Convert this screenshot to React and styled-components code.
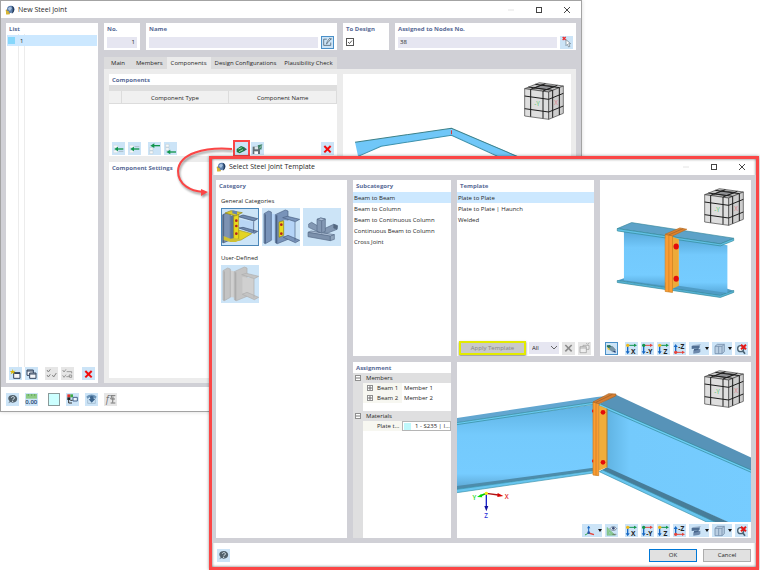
import React, { useState } from 'react';
import styled, { createGlobalStyle, css, ThemeProvider } from 'styled-components';

const theme = {
  color: {
    WHITE: '#ffffff',
    BODY: '#d0d0d6',
    PAGE: '#ececec',
    TAB: '#dcdcdd',
    FIELD: '#e6e6f1',
    SELECT: '#cce8ff',
    BUTTON: '#cce4f7',
    DISABLED: '#e6e6e6',
    TITLE: '#586a96',
    TEXT: '#1f1f1f',
    RED: '#fb4646',
  },
  fontSize: { SMALL: '6px', MEDIUM: '7px' },
};

const GlobalStyle = createGlobalStyle`
  * {
    box-sizing: border-box;
  }
  body {
    margin: 0;
    background-color: #fff;
    font-family: 'Open Sans', 'Noto Sans', sans-serif;
    font-size: 6px;
    line-height: 10px;
    color: #1f1f1f;
  }
  button, input, select {
    margin: 0;
    padding: 0;
    border: 0;
    border-radius: 0;
    font: inherit;
    color: inherit;
  }
  svg {
    display: block;
  }
`;

const SDesktop = styled.div`
  position: relative;
  height: 100vh;
  overflow: hidden;
`;

const SWindow = styled.section`
  position: absolute;
  inset: ${({ $inset }) => $inset};
  display: flex;
  flex-direction: column;
  background-color: ${({ theme }) => theme.color.WHITE};
  border: ${({ theme, $active }) =>
    $active ? `3px solid ${theme.color.RED}` : '1px solid #a3a3a3'};
  box-shadow: ${({ $active }) =>
    $active
      ? '0 0 3px rgba(0, 0, 0, 0.4), inset 0 0 3px rgba(0, 0, 0, 0.6)'
      : '0 0 4px rgba(0, 0, 0, 0.15)'};
`;

const STitleBar = styled.header`
  display: flex;
  flex: none;
  height: ${({ $compact }) => ($compact ? '16px' : '17px')};
  align-items: center;
  gap: 3px;
  padding: 0 8px 0 4px;
`;

const STitle = styled.h1`
  flex: 1;
  margin: 0;
  font-size: ${({ theme }) => theme.fontSize.MEDIUM};
  font-weight: 400;
`;

const SWindowButton = styled.button`
  display: flex;
  width: 12px;
  height: 12px;
  margin-left: 13px;
  align-items: center;
  justify-content: center;
  background: none;
`;

const SBody = styled.main`
  display: flex;
  flex: 1;
  min-height: 0;
  gap: 6px;
  padding: 5px 5px 4px;
  background-color: ${({ theme }) => theme.color.BODY};
`;

const STemplateBody = styled.main`
  display: grid;
  flex: 1;
  min-height: 0;
  grid-template-columns: 131fr 98fr 137fr 151fr;
  grid-template-rows: 1fr 1fr;
  gap: 6px;
  padding: 5px 5px 5px 4px;
  background-color: ${({ theme }) => theme.color.BODY};
`;

const SPanel = styled.section`
  position: relative;
  display: flex;
  flex-direction: column;
  flex: ${({ $flex }) => $flex || 'none'};
  grid-row: ${({ $rows }) => $rows || 'auto'};
  grid-column: ${({ $columns }) => $columns || 'auto'};
  min-width: 0;
  min-height: 0;
  overflow: hidden;
  background-color: ${({ theme }) => theme.color.WHITE};
`;

const panelTitle = css`
  display: block;
  margin: 0;
  padding: 1px 3px 0;
  font-size: ${({ theme }) => theme.fontSize.SMALL};
  font-weight: 700;
  line-height: 10px;
  color: ${({ theme }) => theme.color.TITLE};
`;

const SPanelTitle = styled.h2`
  ${panelTitle}
`;

const SPanelLabel = styled.label`
  ${panelTitle}
`;

const SFieldRow = styled.div`
  display: flex;
  align-items: center;
  gap: 3px;
  height: 16px;
  padding: 0 3px;
`;

const SInput = styled.input`
  flex: 1;
  min-width: 0;
  height: 11px;
  padding: 0 2px;
  text-align: ${({ $align }) => $align || 'left'};
  background-color: ${({ theme }) => theme.color.FIELD};
`;

const SCheckWrap = styled.span`
  display: grid;
  > * {
    grid-area: 1 / 1;
  }
  svg {
    margin: 1px;
    pointer-events: none;
  }
`;

const SCheckbox = styled.input`
  width: 8px;
  height: 8px;
  appearance: none;
  border: 1px solid #555;
  background-color: #fff;
  &:not(:checked) + svg {
    visibility: hidden;
  }
`;

const SToolButton = styled.button`
  display: flex;
  flex: none;
  width: ${({ $wide }) => ($wide ? '20px' : '13px')};
  height: 13px;
  align-items: center;
  justify-content: center;
  gap: 2px;
  margin-left: ${({ $gap }) => ($gap ? '4px' : '0')};
  background-color: ${({ theme, disabled }) =>
    disabled ? theme.color.DISABLED : theme.color.BUTTON};
  border: ${({ $pressed }) => ($pressed ? '1px solid #4a90c8' : '0')};
  outline: ${({ theme, $marked }) => ($marked ? `2px solid ${theme.color.RED}` : 'none')};
`;

const SToolbar = styled.div`
  display: flex;
  flex: none;
  align-items: center;
  gap: 3px;
  margin-top: auto;
  padding: ${({ $padding }) => $padding || '0 3px 1px'};
  justify-content: ${({ $align }) => $align || 'flex-start'};
`;

const SSpacer = styled.span`
  flex: 1;
`;

const SJointList = styled.ul`
  display: grid;
  flex: 1;
  margin: 0 1px;
  padding: 1px 0 0;
  grid-auto-rows: 12px;
  list-style: none;
  background: linear-gradient(
    90deg,
    transparent 11px,
    #ececec 11px 12px,
    transparent 12px 17px,
    #ececec 17px 18px,
    transparent 18px
  );
`;

const SJointRow = styled.button`
  display: flex;
  width: 100%;
  height: 11px;
  align-items: center;
  gap: 5px;
  padding: 0 1px;
  background-color: ${({ theme }) => theme.color.SELECT};
`;

const SSwatch = styled.span`
  width: 7px;
  height: 7px;
  background-color: ${({ $color }) => $color};
`;

const SColorButton = styled.button`
  width: 12px;
  height: 13px;
  margin-left: 4px;
  border: 1px solid #8a9a9a;
  background-color: #ccffff;
`;

const SDetails = styled.div`
  display: flex;
  flex: 1;
  min-width: 0;
  flex-direction: column;
`;

const SHeadRow = styled.div`
  display: flex;
  gap: 6px;
`;

const STabs = styled.div`
  display: flex;
  margin-top: 7px;
`;

const STab = styled.button`
  height: 12px;
  padding: 0 4px;
  white-space: nowrap;
  background-color: ${({ theme, $active }) => ($active ? theme.color.PAGE : theme.color.TAB)};
  &:first-child {
    padding: 0 7px;
  }
`;

const STabPage = styled.div`
  display: flex;
  flex: 1;
  min-height: 0;
  gap: 6px;
  padding: 5px;
  background-color: ${({ theme }) => theme.color.PAGE};
`;

const SColumn = styled.div`
  display: flex;
  flex: 1 1 0;
  min-width: 0;
  flex-direction: column;
  gap: 6px;
`;

const SComponentTable = styled.table`
  width: 100%;
  border-collapse: collapse;
  table-layout: fixed;
  border-top: 6px solid #dedede;
  margin-bottom: 38px;
  th {
    height: 14px;
    padding: 2px 0 0;
    font-weight: 400;
    background-color: #f0f0f0;
    border-right: 1px solid #dcdcdc;
    border-bottom: 1px solid #dcdcdc;
  }
  th:first-child {
    width: 12px;
  }
`;

const SFooter = styled.footer`
  display: flex;
  flex: none;
  height: 24px;
  align-items: center;
  gap: 6px;
  padding: 0 5px;
`;

const SDialogButton = styled.button`
  width: 48px;
  height: 13px;
  background-color: #e1e1e1;
  border: ${({ $primary }) => ($primary ? '1px solid #0078d7' : '1px solid #adadad')};
`;

const SGroupTitle = styled.h3`
  margin: 5px 0 2px;
  padding: 0 5px;
  font-size: ${({ theme }) => theme.fontSize.SMALL};
  font-weight: 400;
  line-height: 10px;
`;

const STiles = styled.div`
  display: flex;
  gap: 3px;
  padding: 0 5px;
  margin-bottom: 2px;
`;

const STile = styled.button`
  width: 38px;
  height: 38px;
  background-color: ${({ theme }) => theme.color.BUTTON};
  outline: ${({ $active }) => ($active ? '1px solid #4a86b8' : 'none')};
  outline-offset: -1px;
`;

const SOptions = styled.ul`
  margin: 0;
  padding: 1px 0 0;
  list-style: none;
`;

const SOption = styled.button`
  display: block;
  width: 100%;
  height: 11px;
  padding: 0 1px;
  text-align: left;
  white-space: nowrap;
  background-color: ${({ theme, $active }) => ($active ? theme.color.SELECT : 'transparent')};
`;

const SApplyButton = styled.button`
  flex: 1;
  height: 14px;
  color: #858585;
  background-color: #c9c9c9;
  border: 1px solid #e2ea00;
  outline: 1px solid #e2ea00;
  outline-offset: -2px;
  box-shadow: 0 1px 2px rgba(0, 0, 0, 0.5);
`;

const SSelectWrap = styled.span`
  display: flex;
  width: 30px;
  align-items: center;
  background-color: ${({ theme }) => theme.color.FIELD};
  svg {
    flex: none;
    margin-right: 2px;
    pointer-events: none;
  }
`;

const SSelect = styled.select`
  flex: 1;
  min-width: 0;
  height: 12px;
  padding-left: 3px;
  appearance: none;
  background: none;
`;

const SAssignments = styled.table`
  width: 100%;
  height: 100%;
  border-collapse: collapse;
  table-layout: fixed;
  line-height: 9px;
  th,
  td {
    height: ${({ $rowHeight }) => $rowHeight || '10px'};
    padding: 0;
    font-weight: 400;
    text-align: left;
    white-space: nowrap;
    overflow: hidden;
  }
`;

const SBlankRow = styled.tr`
  && > * {
    height: 8px;
  }
`;

const SFillRow = styled.tr`
  height: 100%;
`;

const SGutter = styled.td`
  width: 10px;
  background-color: #dfdfe0;
`;

const SGroupCell = styled.th`
  && {
    padding-left: 3px;
  }
  background-color: #dfdfe0;
`;

const SNameCell = styled.th`
  width: 39px;
  background-color: #f7f7f1;
`;

const SCellContent = styled.span`
  display: flex;
  align-items: center;
  gap: 4px;
  padding-left: ${({ $indent }) => $indent || '0'};
`;

const SMaterial = styled(SCellContent)`
  height: 10px;
  padding-left: 1px;
  border: 1px solid #b5b5b5;
`;

const SToggle = styled.button`
  display: flex;
  width: 6px;
  height: 6px;
  align-items: center;
  justify-content: center;
  margin-left: ${({ $gutter }) => ($gutter ? '2px' : '0')};
  background-color: #fff;
  border: 1px solid #8f8f8f;
`;

const SScene = styled.svg`
  position: absolute;
  inset: 0;
  width: 100%;
  height: 100%;
`;

const SCube = styled.svg`
  position: absolute;
  top: 8px;
  right: 7px;
  width: 40px;
  height: 38px;
`;

const SViewTools = styled(SToolbar)`
  position: relative;
`;

const SArrow = styled.svg`
  position: absolute;
  top: 142px;
  left: 174px;
  width: 60px;
  height: 58px;
  pointer-events: none;
  filter: drop-shadow(1px 2px 1px rgba(0, 0, 0, 0.4));
`;

const GREEN = '#12964d';
const RED = '#e5463d';

function Axes({ letter, flip }) {
  const y = flip ? 28 : 7;
  const tip = flip ? 8 : 29;
  const sideColor = flip || letter === '-Y' ? RED : GREEN;
  let origin = '#f0b91d';
  if (flip) origin = RED;
  if (letter === '-Y') origin = GREEN;

  return (
    <>
      <path d={`M8 ${y}V${tip}`} stroke="#1768c4" strokeWidth="4" />
      <path d={flip ? 'M2 12L8 3L14 12Z' : 'M2 25L8 34L14 25Z'} fill="#1768c4" />
      <path d={`M8 ${y}H29`} stroke={sideColor} strokeWidth="3" />
      <path d={`M27 ${y - 5}L36 ${y}L27 ${y + 5}Z`} fill={sideColor} />
      <circle cx="8" cy={y} r="5" fill={origin} />
      <text
        x="25"
        y={flip ? 19 : 32}
        fontSize="20"
        fontWeight="700"
        textAnchor="middle"
        fill="#222"
      >
        {letter}
      </text>
    </>
  );
}

const icons = {
  edit: (
    <g fill="none" stroke="#3d5264" strokeWidth="2.500">
      <path d="M17 8H6v22h25V20" />
      <path d="M16 25l3-9L27 5l4 3L21 20z" fill="#e9f2f8" />
      <path d="M29 7h6" />
    </g>
  ),
  pick: (
    <>
      <path d="M8 3l9 9M17 3L8 12" stroke="#ec2d2d" strokeWidth="4" />
      <path d="M18 11V29L22 25L26 33L30 31L26 23H32Z" fill="#fff" stroke="#667986" strokeWidth="2" />
    </>
  ),
  up: (
    <>
      <path d="M5 7H17V14H5ZM5 22H17V29H5Z" fill="#f5f8fa" stroke="#c3ccd2" />
      <path d="M15 18H34" stroke={GREEN} strokeWidth="4" />
      <path d="M18 11L7 18L18 25Z" fill={GREEN} />
      <path d="M20 25H34" stroke="#9aa8b0" strokeWidth="2" />
    </>
  ),
  down: (
    <>
      <path d="M5 7H17V14H5ZM5 22H17V29H5Z" fill="#f5f8fa" stroke="#c3ccd2" />
      <path d="M15 18H34" stroke={GREEN} strokeWidth="4" />
      <path d="M18 11L7 18L18 25Z" fill={GREEN} />
      <path d="M20 11H34" stroke="#9aa8b0" strokeWidth="2" />
    </>
  ),
  first: (
    <>
      <path d="M5 14H15V22H5ZM5 24H15V32H5Z" fill="#f5f8fa" stroke="#a9b5bd" />
      <path d="M16 8H36" stroke={GREEN} strokeWidth="4" />
      <path d="M19 1L7 8L19 15Z" fill={GREEN} />
    </>
  ),
  last: (
    <>
      <path d="M5 4H15V12H5ZM5 14H15V22H5Z" fill="#f5f8fa" stroke="#a9b5bd" />
      <path d="M16 27H36" stroke={GREEN} strokeWidth="4" />
      <path d="M19 20L7 27L19 34Z" fill={GREEN} />
    </>
  ),
  load: (
    <>
      <path d="M5 18L18 9L28 13V24L14 31L5 27Z" fill="#1d7943" />
      <path d="M10 18L20 14M12 26L24 20" stroke="#a1d6ac" strokeWidth="3" />
      <path d="M27 13L36 19L27 25Z" fill="#3e5c5a" />
    </>
  ),
  save: (
    <>
      <path d="M5 11H27V33H5Z" fill="#617077" />
      <path d="M11 11h10v8H11z" fill="#dbe4e9" />
      <path d="M10 25h11v8H10z" fill="#fff" />
      <path d="M20 7L34 4L31 20L23 17Z" fill="#3e8368" />
      <path d="M25 16L33 7" stroke="#d2e4dc" strokeWidth="2" />
    </>
  ),
  remove: <path d="M10 9L29 28M29 9L10 28" stroke="#f30b0b" strokeWidth="6" />,
  removeGray: <path d="M10 9L29 28M29 9L10 28" stroke="#8c8c8c" strokeWidth="5" />,
  copyGray: (
    <g fill="#eee" stroke="#969696" strokeWidth="2">
      <path d="M15 10H33V22H15Z" />
      <path d="M6 14H25V32H6Z" />
      <path d="M6 18H25M25 3l3 4M34 2l-4 5" />
    </g>
  ),
  add: (
    <>
      <path d="M14 14H33V31H14Z" fill="#f7f7f7" stroke="#33445f" strokeWidth="3" />
      <path d="M14 16H33" stroke="#33445f" strokeWidth="4" />
      <path d="M11 3L13 9L20 8L15 13L17 19L11 15L5 19L7 13L2 9L9 9Z" fill="#d9b910" />
    </>
  ),
  copy: (
    <g fill="#f4f7fa" stroke="#33445f" strokeWidth="3">
      <path d="M6 6H25V22H6ZM6 9H25" />
      <path d="M14 15H33V31H14ZM14 18H33" />
    </g>
  ),
  checks: (
    <g fill="none" stroke="#858585" strokeWidth="3">
      <path d="M6 6L10 12L16 4M6 21L10 27L16 19M22 21L26 27L34 15" />
    </g>
  ),
  invert: (
    <g fill="none" stroke="#8a8a8a" strokeWidth="2.500">
      <path d="M5 6L9 12L15 4M5 22L9 28L15 20M17 11H32V16M16 26H26M24 21H32V28H26Z" />
    </g>
  ),
  help: (
    <>
      <path d="M7 31L11 25C2 15 9 6 20 6C38 6 38 29 20 29C16 29 14 28 13 27Z" fill="#52616b" />
      <path d="M16 14C17 9 27 10 25 16C24 19 20 18 20 22M20 24V27" fill="none" stroke="#dce9f1" strokeWidth="3" />
    </>
  ),
  units: (
    <>
      <path d="M3 3H36V17H3Z" fill="#8dca85" />
      <path d="M10 3V9M20 3V9M29 3V9" stroke="#539d50" strokeWidth="2" />
      <text x="19" y="33" fontSize="18" fontWeight="600" textAnchor="middle" fill="#26436b">
        0,00
      </text>
    </>
  ),
  tree: (
    <>
      <path d="M4 4h9v9H4z" fill="#e4332b" />
      <path d="M13 4h8v9h-8z" fill="#3caa46" />
      <path d="M4 13h9v8H4z" fill="#242424" />
      <path d="M8 20V30H18M13 22H20" fill="none" stroke="#333" strokeWidth="3" />
      <path d="M21 13H34V24H21Z" fill="#eaf4fc" stroke="#46648c" strokeWidth="3" />
    </>
  ),
  view: (
    <>
      <path d="M4 11C13 2 26 2 35 11L31 18C24 9 15 9 8 18Z" fill="#6c94b8" />
      <path d="M14 11L20 8L26 11V17L31 18L20 29L11 19L16 18Z" fill="#3c658d" />
      <path d="M8 20V31H31V20" fill="none" stroke="#97b1c6" strokeWidth="2" />
    </>
  ),
  script: (
    <>
      <text x="5" y="29" fontSize="30" fontStyle="italic" fill="#777">
        f
      </text>
      <path d="M19 8H34M24 8L20 18H33M27 11L26 29M20 30H34" fill="none" stroke="#777" strokeWidth="3" />
    </>
  ),
  model: (
    <>
      <path d="M3 5L14 4L24 14L16 19L3 11Z" fill="#27755b" />
      <path d="M12 11L24 9L34 21L25 29L12 20Z" fill="#7895a6" stroke="#435765" />
      <path d="M5 12L13 17V23L5 18Z" fill="#e9c63a" />
      <path d="M24 27l10 5v-9z" fill="#223f77" />
    </>
  ),
  viewX: <Axes letter="X" />,
  viewY: <Axes letter="-Y" />,
  viewZ: <Axes letter="Z" />,
  viewMinusZ: <Axes letter="-Z" flip />,
  render: (
    <>
      <path d="M5 9L29 5V14L24 16L5 18Z" fill="#506f94" />
      <path d="M10 22L31 17V27L26 30L10 32Z" fill="#6d89ac" />
      <path d="M5 9L10 6L33 4L29 8Z" fill="#93abc6" />
      <path d="M12 18L26 15V20L12 23Z" fill="#46648a" />
    </>
  ),
  box: (
    <g fill="#b9cee2" stroke="#7690ad" strokeWidth="2.500">
      <path d="M6 10L13 4H34V26L27 32H6Z" />
      <path d="M6 10H27V32M27 10L34 4M17 10V32" fill="none" />
    </g>
  ),
  axes: (
    <>
      <path d="M17 5V24" stroke="#1768c4" strokeWidth="3" />
      <path d="M17 24L6 30" stroke="#32a852" strokeWidth="3" />
      <path d="M17 24L33 29" stroke="#e5463d" strokeWidth="4" />
      <path d="M12 10L17 2L22 10Z" fill="#1768c4" />
      <circle cx="17" cy="23" r="4" fill="#2a55aa" />
    </>
  ),
  measure: (
    <>
      <path d="M6 7V31H31ZM12 20V26H19Z" fill="#8fce96" fillRule="evenodd" stroke="#4ea161" />
      <path d="M15 11C20 3 30 3 35 11C30 18 20 18 15 11Z" fill="#e7f0f7" stroke="#4b5c74" strokeWidth="2" />
      <circle cx="25" cy="10" r="4" fill="#384c76" />
      <path d="M22 28H34" stroke="#555" strokeWidth="2" />
    </>
  ),
  clear: (
    <>
      <circle cx="17" cy="17" r="9" fill="#eef4f8" stroke="#4a6374" strokeWidth="4" />
      <path d="M23 23L30 32" stroke="#4a6374" strokeWidth="5" />
      <path d="M18 5L33 19M33 5L18 19" stroke="#e51919" strokeWidth="6" />
    </>
  ),
};

function ToolButton({ icon, label, wide, ...rest }) {
  return (
    <SToolButton type="button" aria-label={label} $wide={wide} {...rest}>
      <svg width="13" height="12" viewBox="0 0 39 36">
        {icons[icon]}
      </svg>
      {wide && (
        <svg width="4" height="3" viewBox="0 0 4 3">
          <path d="M0 0H4L2 3Z" fill="#111" />
        </svg>
      )}
    </SToolButton>
  );
}

function WindowHeader({ title, compact }) {
  return (
    <STitleBar $compact={compact}>
      <svg width="10" height="10" viewBox="0 0 30 30">
        <path d="M2 15L12 10L15 28L4 28Z" fill="#c7a633" />
        <circle cx="17" cy="13" r="11" fill="#5d7fac" />
        <path d="M20 2C31 6 30 21 20 26C24 19 24 9 20 2Z" fill="#243c5c" />
        <path d="M8 11L15 5L21 9L15 18Z" fill="#a9c2de" />
        <path d="M3 18H11V28H3Z" fill="#d8b735" />
      </svg>
      <STitle>{title}</STitle>
      <SWindowButton type="button" aria-label="Minimize">
        <svg width="6" height="6" viewBox="0 0 6 6">
          <path d="M0 3H6" stroke="#e4e4e4" />
        </svg>
      </SWindowButton>
      <SWindowButton type="button" aria-label="Maximize">
        <svg width="6" height="6" viewBox="0 0 6 6">
          <rect x=".5" y=".5" width="5" height="5" fill="none" stroke="#444" />
        </svg>
      </SWindowButton>
      <SWindowButton type="button" aria-label="Close">
        <svg width="6" height="6" viewBox="0 0 6 6">
          <path d="M0 0L6 6M6 0L0 6" stroke="#333" strokeWidth=".9" />
        </svg>
      </SWindowButton>
    </STitleBar>
  );
}

function NavigationCube() {
  return (
    <SCube viewBox="0 0 120 114">
      <g stroke="#3d3d3d" strokeWidth="2" strokeLinejoin="round">
        <path d="M2 20L46 2L118 12L74 30Z" fill="#c4c4c4" />
        <path d="M2 20L74 30V112L2 102Z" fill="#dedede" />
        <path d="M74 30L118 12V94L74 112Z" fill="#cdcdcd" />
        <path d="M30 18L54 8L94 13L68 23Z" fill="#8f9093" />
      </g>
      <path
        d="M20 22V104M57 27V109M2 42L74 52L118 34M2 80L74 90L118 72M86 25V107M106 17V99M13 15L86 25M34 7L106 17M20 22L64 5M57 27L100 10"
        fill="none"
        stroke="#1c1c1c"
        strokeWidth="3"
      />
      <text x="39" y="72" fontSize="19" textAnchor="middle" fill="#51c766">
        -Y
      </text>
      <text x="96" y="68" fontSize="19" textAnchor="middle" fill="#db8087">
        X
      </text>
    </SCube>
  );
}

function FrameScene() {
  return (
    <SScene viewBox="343 74 227 304" preserveAspectRatio="xMidYMin slice">
      <path d="M355 142L451 128V135L381 146L358 156Z" fill="#70c7f8" />
      <path d="M451 128L570 178V188L451 135Z" fill="#70c7f8" />
      <path d="M355 142L451 128L570 179" fill="none" stroke="#3d8088" />
      <path d="M358 156L381 146L451 135L570 189" fill="none" stroke="#3c91ad" />
      <path d="M451 130V134" stroke="#d93636" />
    </SScene>
  );
}

function PlateScene() {
  return (
    <SScene viewBox="450 91 454 527">
      <defs>
        <linearGradient id="plate-web" x1="0" y1="0" x2="0" y2="1">
          <stop offset="0" stopColor="#58a9da" />
          <stop offset=".3" stopColor="#73c9fc" />
          <stop offset=".8" stopColor="#75ccff" />
          <stop offset="1" stopColor="#58aadb" />
        </linearGradient>
      </defs>
      <path d="M502 392L522 385L833 417L852 423L812 438Z" fill="#4f9cc5" />
      <path d="M502 392L812 437L852 422V428L812 443L502 398Z" fill="#58b4da" stroke="#2f8796" strokeWidth="2" />
      <path d="M522 244L646 262V408L522 391Z" fill="url(#plate-web)" />
      <path d="M686 266L833 286V430L686 408Z" fill="url(#plate-web)" />
      <path d="M502 236L545 218L852 265L812 282Z" fill="#5da2c8" stroke="#3c8b9e" strokeWidth="2" />
      <path d="M502 236L812 282L852 266V272L812 288L502 243Z" fill="#62c2e7" stroke="#2f8796" strokeWidth="2" />
      <path d="M666 260L687 268V408L666 418Z" fill="#eeaa38" />
      <path d="M646 254L668 257V428L646 425Z" fill="#fb9d33" stroke="#c87d20" strokeWidth="2" />
      <path d="M657 257V426" stroke="#c87d20" strokeWidth="2" />
      <path d="M646 253L690 234L711 238L668 258Z" fill="#db8130" stroke="#b96c1d" strokeWidth="2" />
      <path d="M657 255L700 236" stroke="#9d6223" strokeWidth="2" />
      <ellipse cx="679" cy="290" rx="8" ry="9" fill="#e30c0c" />
      <ellipse cx="679" cy="387" rx="8" ry="9" fill="#e30c0c" />
    </SScene>
  );
}

function JointScene() {
  return (
    <SScene viewBox="21 -54 882 528" preserveAspectRatio="xMidYMid slice">
      <defs>
        <linearGradient id="web-left" x1="0" y1="0" x2="0" y2="1">
          <stop offset="0" stopColor="#5eb1e1" />
          <stop offset=".35" stopColor="#74cafc" />
          <stop offset=".8" stopColor="#76ccff" />
          <stop offset="1" stopColor="#579fca" />
        </linearGradient>
        <linearGradient id="web-right" x1="0" y1="0" x2="1" y2="0">
          <stop offset="0" stopColor="#60b3e2" />
          <stop offset=".15" stopColor="#74cafc" />
          <stop offset="1" stopColor="#76ccff" />
        </linearGradient>
        <clipPath id="model-area">
          <path d="M0 -54H924V426H0Z" />
        </clipPath>
      </defs>
      <g clipPath="url(#model-area)">
        <path d="M0 134L430 74V270L0 333Z" fill="url(#web-left)" />
        <path d="M0 321L430 263V273L0 331Z" fill="#4d8cab" />
        <path d="M0 331L430 272V279L0 341Z" fill="#68c5ef" stroke="#3b93ab" strokeWidth="2" />
        <path d="M0 117L440 51L470 48L440 67L0 131Z" fill="#62a6d0" />
        <path d="M0 131L430 67V73L0 137Z" fill="#6ccdf4" stroke="#2f8796" strokeWidth="2" />
        <path d="M470 82L924 284V466L470 266Z" fill="url(#web-right)" />
        <path d="M470 262L835 426H775L450 274Z" fill="#477d99" />
        <path d="M448 275L458 270L795 426H770Z" fill="#68c5ef" stroke="#3b93ab" strokeWidth="2" />
        <path d="M448 72L498 44L924 242V282Z" fill="#5793b8" />
        <path d="M448 71L924 279V286L448 78Z" fill="#6ccdf4" stroke="#2f8796" strokeWidth="2" />
        <path d="M446 76L471 86V262L446 272Z" fill="#f0ad3a" />
        <path d="M471 86V262" stroke="#b07a2c" strokeWidth="3" />
        <path d="M429 66L446 70V287L429 285Z" fill="#fb9d33" stroke="#c57a20" strokeWidth="2" />
        <path d="M438 69V286" stroke="#c57a20" strokeWidth="2" />
        <path d="M429 66L476 41L498 42L497 48L447 71Z" fill="#d67e32" stroke="#a96322" strokeWidth="2" />
        <path d="M438 67L487 43" stroke="#955d29" strokeWidth="2" />
        <circle cx="459" cy="97" r="7" fill="#e30c0c" />
        <circle cx="459" cy="247" r="7" fill="#e30c0c" />
        <path d="M428 89V97M428 239V247" stroke="#e30c0c" strokeWidth="3" />
      </g>
      <path d="M109 340L145 345" stroke="#b01212" strokeWidth="4" />
      <path d="M143 339L160 348L142 351Z" fill="#d80000" />
      <path d="M109 340L92 347" stroke="#00c000" strokeWidth="5" />
      <path d="M94 342L81 351L97 352Z" fill="#00e000" />
      <path d="M109 340V380" stroke="#1a23c9" strokeWidth="4" />
      <path d="M103 378H115L109 394Z" fill="#1212a0" />
      <circle cx="109" cy="340" r="5" fill="#f2ef12" />
      <g fontSize="19" fontWeight="600" textAnchor="middle">
        <text x="170" y="356" fill="#e32525">
          X
        </text>
        <text x="73" y="360" fill="#18d918">
          Y
        </text>
        <text x="108" y="414" fill="#2c35d8">
          Z
        </text>
      </g>
    </SScene>
  );
}

function ColumnShape({ gray }) {
  const dark = gray ? '#adadad' : '#4a6184';
  const mid = gray ? '#c4c4c4' : '#7893b9';
  const light = gray ? '#d0d0d0' : '#b5d4f7';
  return (
    <>
      <path d="M26 16L46 20V98L26 96Z" fill={light} />
      <path d="M6 17L20 9L28 12V97L10 107L6 105Z" fill={mid} stroke={dark} strokeWidth="2" />
      <path d="M10 19V106" stroke={dark} strokeWidth="3" />
      <path d="M40 20L70 6L78 9V94L46 107L40 104Z" fill={mid} stroke={dark} strokeWidth="2" />
      <path d="M44 22V106" stroke={dark} strokeWidth="4" />
      <path d="M64 36L99 40V92L64 84Z" fill={light} />
      <path d="M64 88L78 82L113 97L100 104Z" fill={mid} stroke={dark} strokeWidth="2" />
      <path d="M62 29L76 25L113 34L100 41Z" fill={mid} stroke={dark} strokeWidth="2" />
      <path d="M99 42V98" stroke={dark} strokeWidth="2" />
    </>
  );
}

function CategoryIcon({ kind }) {
  return (
    <svg width="38" height="38" viewBox="0 0 114 114">
      {kind === 'haunch' && (
        <>
          <path d="M8 18L28 14V96L8 104Z" fill="#7d93b3" stroke="#445b7d" strokeWidth="2" />
          <path d="M28 24L40 20V98L28 100Z" fill="#5d7596" />
          <path d="M8 18L4 20V104L8 106Z" fill="#3f5678" />
          <path d="M12 15L30 8L64 14L44 24Z" fill="#d9ca2a" stroke="#8d8420" strokeWidth="2" />
          <path d="M34 7L48 10V20L34 16Z" fill="#6984ab" />
          <path d="M56 34L98 42V72L56 64Z" fill="#b9d6f5" />
          <path d="M52 26L66 21L110 32L99 39Z" fill="#6f8ab0" stroke="#3e5272" strokeWidth="2" />
          <path d="M54 60L66 58L110 70L100 76Z" fill="#6f8ab0" stroke="#3e5272" strokeWidth="2" />
          <path d="M98 40V72" stroke="#3e5272" strokeWidth="2" />
          <path d="M52 66L92 77L60 96L42 99Z" fill="#e4d422" stroke="#a39a1c" strokeWidth="2" />
          <path d="M38 25L53 20V92L38 99Z" fill="#ead91d" stroke="#9a8f16" strokeWidth="2" />
          <path d="M8 84L28 92L42 90L62 94L44 102L28 102L8 96Z" fill="#cfc032" />
          <g fill="#b4231f">
            <circle cx="46" cy="38" r="4" />
            <circle cx="46" cy="54" r="4" />
            <circle cx="46" cy="77" r="4" />
          </g>
        </>
      )}
      {kind === 'plate' && (
        <>
          <ColumnShape />
          <path d="M51 42L65 38V82L51 88Z" fill="#eadb20" stroke="#8f8514" strokeWidth="2" />
          <g fill="#b4231f">
            <circle cx="58" cy="50" r="4" />
            <circle cx="58" cy="77" r="4" />
          </g>
        </>
      )}
      {kind === 'tubes' && (
        <g stroke="#566b88" strokeWidth="2" strokeLinejoin="round">
          <path d="M15 73L24 69L94 80L82 86Z" fill="#adbfd5" />
          <path d="M15 73L82 84V98L15 86Z" fill="#7c91ac" />
          <path d="M82 84L94 80V94L82 98Z" fill="#91a5bd" />
          <path d="M17 48L26 43L56 61L50 74L17 58Z" fill="#8398b3" />
          <path d="M62 63L92 49L103 53L102 64L72 76L62 74Z" fill="#8398b3" />
          <path d="M92 49L103 53L102 64L92 60Z" fill="#56697f" />
          <path d="M42 34L53 30L67 33V70L56 75L42 70Z" fill="#8398b3" />
          <path d="M42 34L53 30L67 33L56 38Z" fill="#adbfd5" />
          <path d="M56 38V74" fill="none" />
        </g>
      )}
      {kind === 'user' && <ColumnShape gray />}
    </svg>
  );
}

function ViewButtons() {
  return (
    <>
      <ToolButton icon="viewX" label="View in X" $gap />
      <ToolButton icon="viewY" label="View against Y" />
      <ToolButton icon="viewZ" label="View in Z" />
      <ToolButton icon="viewMinusZ" label="View against Z" />
      <ToolButton icon="render" label="Display style" wide />
      <ToolButton icon="box" label="Isometric view" wide />
      <ToolButton icon="clear" label="Reset view" />
    </>
  );
}

const tabs = ['Main', 'Members', 'Components', 'Design Configurations', 'Plausibility Check'];

function JointWindow() {
  const [tab, setTab] = useState('Components');
  const [joint, setJoint] = useState({ no: '1', name: '', design: true, nodes: '38' });

  const handleJoint = (e) => {
    const { name, type, checked, value } = e.target;
    setJoint({ ...joint, [name]: type === 'checkbox' ? checked : value });
  };

  return (
    <SWindow $inset="0 178px 158px 0">
      <WindowHeader title="New Steel Joint" />
      <SBody>
        <SPanel $flex="0 0 92px">
          <SPanelTitle>List</SPanelTitle>
          <SJointList>
            <li>
              <SJointRow type="button">
                <SSwatch $color="#86d7fb" />
                1
              </SJointRow>
            </li>
          </SJointList>
          <SToolbar $padding="0 3px 3px">
            <ToolButton icon="add" label="New joint" />
            <ToolButton icon="copy" label="Copy joint" />
            <ToolButton icon="checks" label="Select all" disabled $gap />
            <ToolButton icon="invert" label="Invert selection" disabled />
            <SSpacer />
            <ToolButton icon="remove" label="Delete joint" />
          </SToolbar>
        </SPanel>
        <SDetails>
          <SHeadRow>
            <SPanel $flex="0 0 36px">
              <SPanelLabel htmlFor="joint-no">No.</SPanelLabel>
              <SFieldRow>
                <SInput id="joint-no" name="no" value={joint.no} onChange={handleJoint} $align="right" />
              </SFieldRow>
            </SPanel>
            <SPanel $flex="191 1 0">
              <SPanelLabel htmlFor="joint-name">Name</SPanelLabel>
              <SFieldRow>
                <SInput id="joint-name" name="name" value={joint.name} onChange={handleJoint} />
                <ToolButton icon="edit" label="Edit name" $pressed />
              </SFieldRow>
            </SPanel>
            <SPanel $flex="0 0 46px">
              <SPanelLabel htmlFor="joint-design">To Design</SPanelLabel>
              <SFieldRow>
                <SCheckWrap>
                  <SCheckbox
                    id="joint-design"
                    type="checkbox"
                    name="design"
                    checked={joint.design}
                    onChange={handleJoint}
                  />
                  <svg width="6" height="6" viewBox="0 0 6 6">
                    <path d="M1 3L2.500 4.500L5 1.500" fill="none" stroke="#333" strokeWidth=".8" />
                  </svg>
                </SCheckWrap>
              </SFieldRow>
            </SPanel>
            <SPanel $flex="181 1 0">
              <SPanelLabel htmlFor="joint-nodes">Assigned to Nodes No.</SPanelLabel>
              <SFieldRow>
                <SInput id="joint-nodes" name="nodes" value={joint.nodes} onChange={handleJoint} />
                <ToolButton icon="pick" label="Pick nodes" />
              </SFieldRow>
            </SPanel>
          </SHeadRow>
          <STabs role="tablist">
            {tabs.map((name) => (
              <STab
                key={name}
                type="button"
                role="tab"
                aria-selected={tab === name}
                $active={tab === name}
                onClick={() => setTab(name)}
              >
                {name}
              </STab>
            ))}
          </STabs>
          <STabPage>
            <SColumn>
              <SPanel>
                <SPanelTitle>Components</SPanelTitle>
                <SComponentTable>
                  <thead>
                    <tr>
                      <th aria-label="Row" />
                      <th>Component Type</th>
                      <th>Component Name</th>
                    </tr>
                  </thead>
                </SComponentTable>
                <SToolbar>
                  <ToolButton icon="up" label="Move up" />
                  <ToolButton icon="down" label="Move down" />
                  <ToolButton icon="first" label="Insert before" $gap />
                  <ToolButton icon="last" label="Insert after" />
                  <SSpacer />
                  <ToolButton icon="load" label="Load template" $marked />
                  <ToolButton icon="save" label="Save template" />
                  <SSpacer />
                  <ToolButton icon="remove" label="Delete component" />
                </SToolbar>
              </SPanel>
              <SPanel $flex="1">
                <SPanelTitle>Component Settings</SPanelTitle>
              </SPanel>
            </SColumn>
            <SColumn>
              <SPanel $flex="1">
                <FrameScene />
                <NavigationCube />
              </SPanel>
            </SColumn>
          </STabPage>
        </SDetails>
      </SBody>
      <SFooter>
        <ToolButton icon="help" label="Help" />
        <ToolButton icon="units" label="Units" />
        <SColorButton type="button" aria-label="Color" />
        <ToolButton icon="tree" label="Color by type" />
        <ToolButton icon="view" label="Show view" />
        <ToolButton icon="script" label="Formula" disabled />
      </SFooter>
    </SWindow>
  );
}

const subcategories = [
  'Beam to Beam',
  'Beam to Column',
  'Beam to Continuous Column',
  'Continuous Beam to Column',
  'Cross Joint',
];

const templates = ['Plate to Plate', 'Plate to Plate | Haunch', 'Welded'];

function OptionList({ items }) {
  const [selected, setSelected] = useState(items[0]);

  return (
    <SOptions>
      {items.map((item) => (
        <li key={item}>
          <SOption type="button" $active={item === selected} onClick={() => setSelected(item)}>
            {item}
          </SOption>
        </li>
      ))}
    </SOptions>
  );
}

function Toggle({ plus, gutter, label }) {
  return (
    <SToggle type="button" aria-label={label} $gutter={gutter}>
      <svg width="4" height="4" viewBox="0 0 4 4">
        <path d={plus ? 'M0 2H4M2 0V4' : 'M0 2H4'} stroke="#555" strokeWidth=".8" />
      </svg>
    </SToggle>
  );
}

function AssignmentTable() {
  return (
    <SAssignments>
      <colgroup>
        <col width="10" />
        <col width="39" />
        <col />
      </colgroup>
      <tbody>
        <tr>
          <SGutter>
            <Toggle gutter label="Toggle members" />
          </SGutter>
          <SGroupCell colSpan="2">Members</SGroupCell>
        </tr>
        {['1', '2'].map((no) => (
          <tr key={no}>
            <SGutter />
            <SNameCell>
              <SCellContent $indent="4px">
                <Toggle plus label={`Toggle beam ${no}`} />
                Beam {no}
              </SCellContent>
            </SNameCell>
            <td>
              <SCellContent $indent="2px">Member {no}</SCellContent>
            </td>
          </tr>
        ))}
        <SBlankRow>
          <SGutter />
          <td />
          <td />
        </SBlankRow>
        <tr>
          <SGutter>
            <Toggle gutter label="Toggle materials" />
          </SGutter>
          <SGroupCell colSpan="2">Materials</SGroupCell>
        </tr>
        <tr>
          <SGutter />
          <SNameCell>
            <SCellContent $indent="14px">Plate t...</SCellContent>
          </SNameCell>
          <td>
            <SMaterial>
              <SSwatch $color="#bff8fb" />1 - S235 | I...
            </SMaterial>
          </td>
        </tr>
        <SFillRow>
          <SGutter />
          <td />
          <td />
        </SFillRow>
      </tbody>
    </SAssignments>
  );
}

function TemplateWindow() {
  const [category, setCategory] = useState('haunch');

  return (
    <SWindow $active $inset="156px 1px 0 209px">
      <WindowHeader title="Select Steel Joint Template" compact />
      <STemplateBody>
        <SPanel $rows="1 / 3">
          <SPanelTitle>Category</SPanelTitle>
          <SGroupTitle>General Categories</SGroupTitle>
          <STiles>
            {['haunch', 'plate', 'tubes'].map((kind) => (
              <STile
                key={kind}
                type="button"
                aria-label={kind}
                $active={category === kind}
                onClick={() => setCategory(kind)}
              >
                <CategoryIcon kind={kind} />
              </STile>
            ))}
          </STiles>
          <SGroupTitle>User-Defined</SGroupTitle>
          <STiles>
            <STile type="button" aria-label="User-defined">
              <CategoryIcon kind="user" />
            </STile>
          </STiles>
        </SPanel>
        <SPanel>
          <SPanelTitle>Subcategory</SPanelTitle>
          <OptionList items={subcategories} />
        </SPanel>
        <SPanel>
          <SPanelTitle>Template</SPanelTitle>
          <OptionList items={templates} />
          <SToolbar $padding="0 3px 1px 2px">
            <SApplyButton type="button" disabled>
              Apply Template
            </SApplyButton>
            <SSelectWrap>
              <SSelect aria-label="Filter" defaultValue="All">
                <option>All</option>
              </SSelect>
              <svg width="6" height="4" viewBox="0 0 6 4">
                <path d="M0 0L3 3L6 0" fill="none" stroke="#444" strokeWidth=".8" />
              </svg>
            </SSelectWrap>
            <ToolButton icon="removeGray" label="Delete template" disabled />
            <ToolButton icon="copyGray" label="Copy template" disabled />
          </SToolbar>
        </SPanel>
        <SPanel>
          <PlateScene />
          <NavigationCube />
          <SViewTools $align="flex-end">
            <ToolButton icon="model" label="Show model" $pressed />
            <ViewButtons />
          </SViewTools>
        </SPanel>
        <SPanel>
          <SPanelTitle>Assignment</SPanelTitle>
          <AssignmentTable />
        </SPanel>
        <SPanel $columns="3 / 5">
          <JointScene />
          <NavigationCube />
          <SViewTools $align="flex-end">
            <ToolButton icon="axes" label="Axes" wide />
            <ToolButton icon="measure" label="Show dimensions" />
            <ViewButtons />
          </SViewTools>
        </SPanel>
      </STemplateBody>
      <SFooter>
        <ToolButton icon="help" label="Help" />
        <SSpacer />
        <SDialogButton type="submit" $primary>
          OK
        </SDialogButton>
        <SDialogButton type="button">Cancel</SDialogButton>
      </SFooter>
    </SWindow>
  );
}

function App() {
  return (
    <ThemeProvider theme={theme}>
      <GlobalStyle />
      <SDesktop>
        <JointWindow />
        <TemplateWindow />
        <SArrow viewBox="174 142 60 58">
          <path
            d="M232 149C205 147 179 153 178 171C178 185 191 191 203 192"
            fill="none"
            stroke={theme.color.RED}
            strokeWidth="2"
          />
          <path d="M201 189L208 192L201 196Z" fill={theme.color.RED} />
        </SArrow>
      </SDesktop>
    </ThemeProvider>
  );
}

export default App;
